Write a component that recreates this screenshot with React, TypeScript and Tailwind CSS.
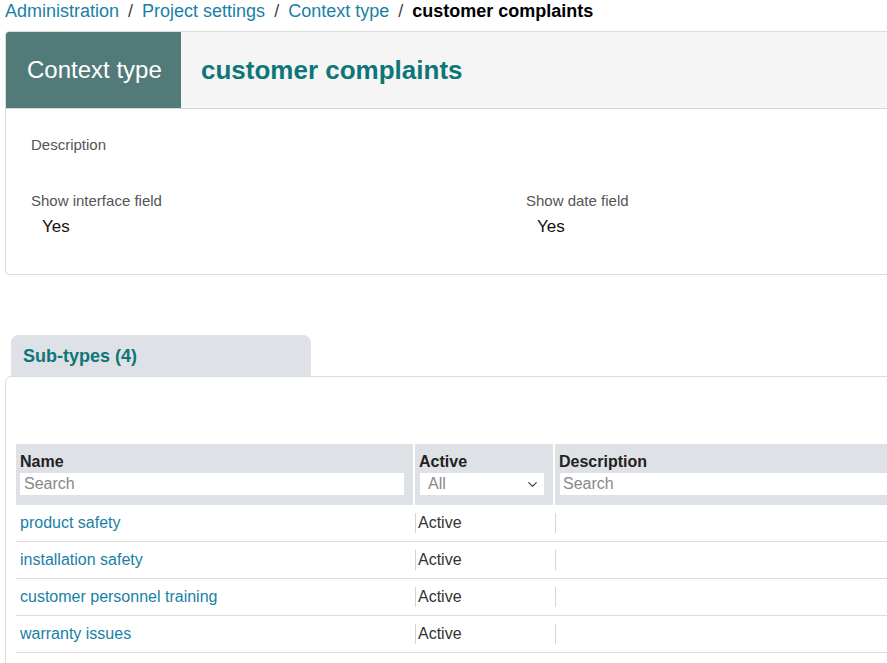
import { ChevronDown } from 'lucide-react'

const font = { fontFamily: '"Liberation Sans", Arial, sans-serif' }

const subTypes = [
  'product safety',
  'installation safety',
  'customer personnel training',
  'warranty issues',
]

export default function App() {
  return (
    <div className="w-[887px] h-[663px] overflow-hidden bg-white text-[#222]" style={font}>
      {/* Breadcrumb */}
      <nav className="flex items-center h-[22px] pl-[5px] text-[18px] leading-[22px]">
        <span className="text-[#1a7fa6]">Administration</span>
        <span className="mx-[9px] text-[#444]">/</span>
        <span className="text-[#1a7fa6]">Project settings</span>
        <span className="mx-[9px] text-[#444]">/</span>
        <span className="text-[#1a7fa6]">Context type</span>
        <span className="mx-[9px] text-[#444]">/</span>
        <span className="font-bold text-black">customer complaints</span>
      </nav>

      {/* Header card */}
      <div className="mt-[9px] ml-[5px] w-[1000px] border border-[#dcdcdc] rounded-l-[4px] overflow-hidden">
        <div className="flex h-[77px] bg-[#f5f5f5] border-b border-[#d6d6d6]">
          <div className="w-[175px] bg-[#527a78] flex items-center pl-[21px] text-white text-[24px]">
            Context type
          </div>
          <div className="flex items-center pl-[20px] text-[26px] font-bold text-[#0e7678]">
            customer complaints
          </div>
        </div>
        <div className="h-[165px] pl-[25px] pt-[26px]">
          <div className="text-[15px] leading-[19px] text-[#555]">Description</div>
          <div className="flex mt-[37px]">
            <div className="w-[495px]">
              <div className="text-[15px] leading-[19px] text-[#555]">Show interface field</div>
              <div className="mt-[6px] pl-[11px] text-[17px] leading-[22px] text-[#111]">Yes</div>
            </div>
            <div>
              <div className="text-[15px] leading-[19px] text-[#555]">Show date field</div>
              <div className="mt-[6px] pl-[11px] text-[17px] leading-[22px] text-[#111]">Yes</div>
            </div>
          </div>
        </div>
      </div>

      {/* Sub-types tab */}
      <div className="mt-[60px] ml-[11px] w-[300px] h-[41px] bg-[#dee1e5] rounded-t-[8px] flex items-center pl-[12px] pt-[1px] text-[18px] font-bold text-[#0e7678]">
        Sub-types (4)
      </div>

      {/* Sub-types panel */}
      <div className="ml-[5px] w-[1000px] border border-[#dcdcdc] rounded-tl-[6px] pl-[10px] pt-[67px]">
        <div className="flex h-[61px] text-[16px]">
          <div className="w-[397px] bg-[#dee1e5] pl-[4px] pr-[9px] pt-[9px]">
            <div className="font-bold leading-[18px] text-[#222]">Name</div>
            <div className="mt-[2px] h-[22px] bg-white text-[#888] px-[4px] leading-[22px]">Search</div>
          </div>
          <div className="w-[140px] bg-[#dee1e5] border-l-2 border-white pl-[5px] pr-[9px] pt-[9px]">
            <div className="font-bold leading-[18px] text-[#222] -ml-[1px]">Active</div>
            <div className="mt-[2px] h-[22px] bg-white text-[#888] pl-[8px] pr-[4px] leading-[22px] flex items-center justify-between">
              <span>All</span>
              <ChevronDown size={15} strokeWidth={2} className="text-[#444]" />
            </div>
          </div>
          <div className="flex-1 bg-[#dee1e5] border-l-2 border-white pl-[5px] pr-[9px] pt-[9px]">
            <div className="font-bold leading-[18px] text-[#222] -ml-[1px]">Description</div>
            <div className="mt-[2px] h-[22px] bg-white text-[#888] px-[3px] leading-[22px]">Search</div>
          </div>
        </div>
        {subTypes.map((name) => (
          <div key={name} className="flex h-[37px] items-center border-b border-[#dcdcdc] text-[16px]">
            <div className="w-[399px] pl-[4px] text-[#1a7fa6]">{name}</div>
            <div className="w-[140px] h-[20px] border-l border-[#d4d4d4] pl-[2px] leading-[20px] text-[#333]">
              Active
            </div>
            <div className="flex-1 h-[20px] border-l border-[#d4d4d4]" />
          </div>
        ))}
        <div className="h-[20px]" />
      </div>
    </div>
  )
}
